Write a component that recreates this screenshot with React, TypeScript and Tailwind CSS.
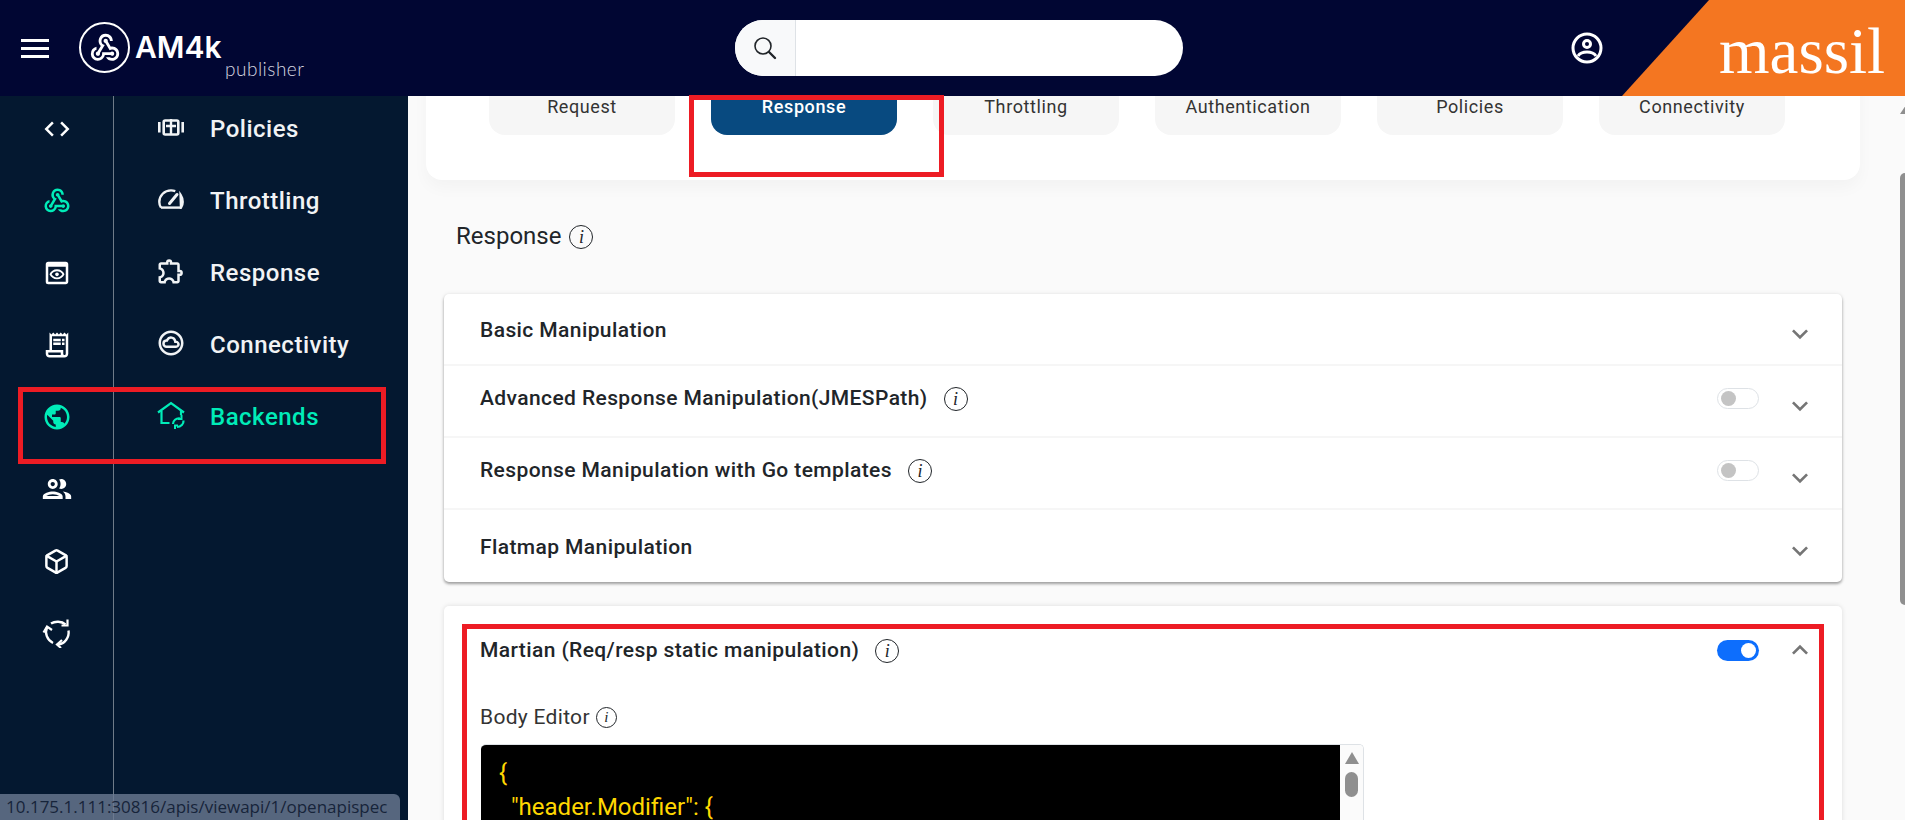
import { MdCode, MdExpandLess, MdExpandMore, MdOutlineCloudCircle, MdOutlineExtension, MdOutlinePeople, MdOutlinePreview, MdOutlineReceiptLong, MdPublic, MdWebhook } from "react-icons/md";
import { FiBox } from "react-icons/fi";
import { ReactNode } from "react";

const PoliciesIcon = () => (
  <svg viewBox="0 0 26 18" className="w-[26px] h-[18px]" fill="none" stroke="currentColor" strokeWidth="2.600">
    <path d="M1.300 4v10.500M24.700 4v10.500" />
    <rect x="5.700" y="2.500" width="14.600" height="14" rx="1.500" />
    <path d="M13 1v16M8 8h10" strokeWidth="2.400" />
  </svg>
);

const GaugeIcon = () => (
  <svg viewBox="0 0 26 20" className="w-[26px] h-[20px]" fill="none" stroke="currentColor" strokeWidth="2.400">
    <path d="M3 18.600C1.900 17 1.300 15 1.300 13 1.300 6.500 6.500 1.400 13 1.400c1.500 0 2.900.3 4.300.8M22.600 6c1.300 2 2.100 4.400 2.100 7 0 2-.6 4-1.700 5.600z" />
    <path d="M3 18.600h20" />
    <path d="M11.500 14.500l7.500-9" strokeWidth="3" strokeLinecap="round" />
  </svg>
);

const HomeSyncIcon = () => (
  <svg viewBox="0 0 28 28" className="w-[28px] h-[28px]" fill="none" stroke="currentColor" strokeWidth="2.200">
    <path d="M1 11.500L14 2l13 9.500" />
    <path d="M4.500 10v12h8" />
    <path d="M24 10v4" />
    <path d="M16 23c0-3.500 3-6 7-5.500M26.500 19.500c.3 3.500-2.500 6.500-6.500 6.500" />
    <path d="M24.500 14v4h-3.500M18 28v-3.500h3" strokeWidth="2" />
  </svg>
);

const RecycleIcon = () => (
  <svg viewBox="0 0 30 30" className="w-[30px] h-[30px]" fill="none" stroke="currentColor" strokeWidth="2.400">
    <path d="M9 5.500C13 3 19.500 3 23.500 6.500" />
    <path d="M5 9.500C2.500 15 5 22 11 25" />
    <path d="M26.500 12.500C27.500 19 23 26 16 26.500" />
    <path d="M25.500 1.500v6h-6M1.500 14.500L5 8.500l5 3.500M20 22l-5 4.500 4 3.500" strokeWidth="2.200" />
  </svg>
);

const UserIcon = () => (
  <svg viewBox="0 0 32 32" className="w-8 h-8" fill="none" stroke="currentColor" strokeWidth="3">
    <circle cx="16" cy="16" r="14" />
    <circle cx="16" cy="12" r="3.500" />
    <path d="M7 24c2-3 5.500-4 9-4s7 1 9 4" />
  </svg>
);

const SearchIcon = () => (
  <svg viewBox="0 0 24 24" className="w-6 h-6" fill="none" stroke="#212529" strokeWidth="1.600">
    <circle cx="10" cy="10" r="8" />
    <path d="M16 16l6 6" strokeWidth="2.400" strokeLinecap="round" />
  </svg>
);

const Info = ({ size = "w-6 h-6 text-[18px]" }: { size?: string }) => (
  <span className={`${size} inline-flex items-center justify-center rounded-full border-[1.5px] border-[#212529] text-[#212529] italic font-normal tracking-normal font-['Liberation_Serif',serif] leading-none shrink-0`}>
    i
  </span>
);

const railIcons: { icon: ReactNode; active?: boolean; current?: boolean }[] = [
  { icon: <MdCode size={30} /> },
  { icon: <MdWebhook size={30} />, active: true, current: true },
  { icon: <MdOutlinePreview size={30} /> },
  { icon: <MdOutlineReceiptLong size={30} /> },
  { icon: <MdPublic size={30} />, active: true },
  { icon: <MdOutlinePeople size={34} /> },
  { icon: <FiBox size={27} strokeWidth={2.200} /> },
  { icon: <RecycleIcon /> },
];

const menu: { label: string; icon: ReactNode; active?: boolean }[] = [
  { label: "Policies", icon: <PoliciesIcon /> },
  { label: "Throttling", icon: <GaugeIcon /> },
  { label: "Response", icon: <MdOutlineExtension size={30} /> },
  { label: "Connectivity", icon: <MdOutlineCloudCircle size={30} /> },
  { label: "Backends", icon: <HomeSyncIcon />, active: true },
];

const tabs = ["Request", "Response", "Throttling", "Authentication", "Policies", "Connectivity"];

const Toggle = ({ on }: { on?: boolean }) =>
  on ? (
    <span className="w-[42px] h-[21px] rounded-full bg-[#0d6efd] flex items-center justify-end pr-[3px]">
      <span className="w-[15px] h-[15px] rounded-full bg-white" />
    </span>
  ) : (
    <span className="w-[42px] h-[21px] rounded-full border border-[#dee2e6] bg-white flex items-center pl-[3px]">
      <span className="w-[15px] h-[15px] rounded-full bg-[#c4c4c4]" />
    </span>
  );

const Row = ({ title, info, toggle }: { title: string; info?: boolean; toggle?: boolean }) => (
  <div className="h-[72px] flex items-center pl-9 pr-[26px] border-b-2 border-[#f6f6f6] last:border-b-0">
    <span className={`text-[21px] font-medium text-[#212529] tracking-[0.4px] flex items-center gap-4 ${toggle ? "-mt-[5px]" : "mt-[3px]"}`}>
      {title}
      {info && <Info />}
    </span>
    {toggle && <span className="ml-auto mr-[25px] -mt-[5px]"><Toggle /></span>}
    <MdExpandMore size={32} className={`text-[#757575] ${toggle ? "mt-[9px]" : "ml-auto mt-[9px]"}`} />
  </div>
);

export default function App() {
  return (
    <div className="h-screen w-full overflow-hidden flex flex-col bg-[#fafafa] font-['Roboto',sans-serif] relative">
      {/* Top bar */}
      <header className="h-24 shrink-0 bg-[#010633] flex items-center relative z-10 overflow-hidden">
        <div className="w-7 ml-[21px] flex flex-col gap-[5px]">
          <span className="h-[3px] bg-white" />
          <span className="h-[3px] bg-white" />
          <span className="h-[3px] bg-white" />
        </div>
        <div className="ml-[30px] w-[51px] h-[51px] rounded-full border-2 border-white flex items-center justify-center text-white -mt-[1px]">
          <MdWebhook size={34} />
        </div>
        <div className="ml-[5px] relative text-white w-[170px] h-[60px]">
          <span className="absolute left-0 top-[11px] text-[30px] leading-[36px] font-semibold font-['Inter',sans-serif]">AM4k</span>
          <span className="absolute left-[90px] top-[39px] text-[19px] leading-6 font-light text-[#d6d6e0] font-['Lato',sans-serif] tracking-[0.5px]">publisher</span>
        </div>
        <div className="ml-[430px] w-[448px] h-14 rounded-full bg-white overflow-hidden flex">
          <div className="w-[61px] bg-[#f8f9fa] border-r border-[#dee2e6] flex items-center justify-center">
            <SearchIcon />
          </div>
        </div>
        <div className="ml-[388px] text-white"><UserIcon /></div>
        <div className="absolute right-0 top-0 bottom-0 w-[283px] bg-[#f47621] [clip-path:polygon(87px_0,100%_0,100%_100%,0_100%)]">
          <span className="absolute left-[97px] top-[14px] text-[65px] leading-[75px] text-white font-['Liberation_Serif',serif]">massil</span>
        </div>
      </header>

      <div className="flex-1 flex min-h-0">
        {/* Sidebar */}
        <aside className="w-[408px] shrink-0 bg-[#041830] flex">
          <div className="w-[114px] border-r border-[#6f7b88] -mt-[3px]">
            {railIcons.map((item, i) => (
              <div key={i} className={`h-[72px] flex items-center justify-center ${item.active ? "text-[#00ecb8]" : "text-white"}`}>
                {item.icon}
              </div>
            ))}
          </div>
          <nav className="flex-1 -mt-[3px]">
            {menu.map((item) => (
              <div key={item.label} className={`h-[72px] flex items-center ${item.active ? "text-[#00ecb8]" : "text-[#f1f3f5]"}`}>
                <span className="w-[96px] flex justify-center -mt-[4px] pl-[18px]">{item.icon}</span>
                <span className="text-[24px] font-medium tracking-[0.5px]">{item.label}</span>
              </div>
            ))}
          </nav>
        </aside>

        {/* Main */}
        <main className="flex-1 min-w-0 pr-[45px] pl-[18px] relative">
          <div className="-mt-9 h-[120px] bg-white rounded-2xl shadow-[0_8px_16px_rgba(0,0,0,0.03)] pt-[19px] pl-[63px] flex gap-9">
            {tabs.map((tab) => (
              <div
                key={tab}
                className={`w-[186px] h-14 pb-[2px] rounded-2xl flex items-center justify-center text-[18px] tracking-[0.6px] ${tab === "Response" ? "bg-[#084a80] text-white font-medium" : "bg-[#f6f6f6] text-[#333]"}`}
              >
                {tab}
              </div>
            ))}
          </div>

          <div className="h-[115px] pl-[30px] flex items-center gap-2 text-[24px] text-[#212529] -mt-[1px]">
            <span className="-mt-[1px]">Response</span>
            <Info />
          </div>

          <div className="ml-[18px] w-[1398px] bg-white rounded-[5px] shadow-[0_2px_3px_rgba(0,0,0,0.35),0_0_4px_rgba(0,0,0,0.08)]">
            <Row title="Basic Manipulation" />
            <Row title="Advanced Response Manipulation(JMESPath)" info toggle />
            <Row title="Response Manipulation with Go templates" info toggle />
            <Row title="Flatmap Manipulation" />
          </div>

          <div className="ml-[18px] mt-6 w-[1398px] h-[400px] bg-white rounded-[5px] shadow-[0_0_5px_rgba(0,0,0,0.12)] pl-9 pr-[26px] pt-[30px]">
            <div className="flex items-center h-7">
              <span className="text-[21px] font-medium text-[#212529] tracking-[0.4px] flex items-center gap-4 mt-[2px]">
                Martian (Req/resp static manipulation)
                <Info />
              </span>
              <span className="ml-auto mr-[25px]"><Toggle on /></span>
              <MdExpandLess size={32} className="text-[#757575]" />
            </div>
            <div className="mt-[41px] pt-[1px] h-6 flex items-center gap-[6px] text-[21px] tracking-[0.3px] text-[#333]">
              Body Editor
              <Info size="w-[21px] h-[21px] text-[15px]" />
            </div>
            <div className="mt-[15px] w-[883px] h-[200px] flex rounded-t-[5px] border-t border-r border-[#dee2e6] overflow-hidden ml-[1px]">
              <pre className="w-[859px] bg-black text-[#ffd700] font-['Roboto',sans-serif] text-[24px] leading-[34px] pl-[18px] pt-[11px]">
                {"{\n  \"header.Modifier\": {"}
              </pre>
              <div className="flex-1 bg-[#fbfbfb] flex flex-col items-center pt-[7px]">
                <span className="w-0 h-0 border-x-[7px] border-x-transparent border-b-[12px] border-b-[#8f8f8f]" />
                <span className="mt-[8px] w-[13px] h-[25px] rounded-full bg-[#8f8f8f]" />
              </div>
            </div>
          </div>

          {/* page scrollbar, cut off by the window edge */}
          <span className="absolute right-0 top-[9px] w-0 h-0 border-l-[6px] border-l-transparent border-b-[9px] border-b-[#8f8f8f] translate-x-[1px]" />
          <span className="absolute right-0 top-[77px] w-[5px] h-[432px] rounded-l-md bg-[#8f8f8f]" />
        </main>
      </div>

      {/* Annotation boxes drawn over the screenshot */}
      <div className="absolute left-[18px] top-[387px] w-[368px] h-[77px] border-[5px] border-[#ed1c24] z-20" />
      <div className="absolute left-[689px] top-[95px] w-[255px] h-[82px] border-[5px] border-[#ed1c24] z-20" />
      <div className="absolute left-[462px] top-[624px] w-[1362px] h-[260px] border-[5px] border-[#ed1c24] z-20" />

      {/* Browser status bubble */}
      <div className="absolute left-0 bottom-0 w-[400px] h-[26px] bg-[#6b7b92]/80 rounded-tr-md pl-1.5 text-[17px] leading-[26px] text-[#16243a] font-['Open_Sans',sans-serif] z-30 whitespace-nowrap overflow-hidden">
        10.175.1.111:30816/apis/viewapi/1/openapispec
      </div>
    </div>
  );
}
